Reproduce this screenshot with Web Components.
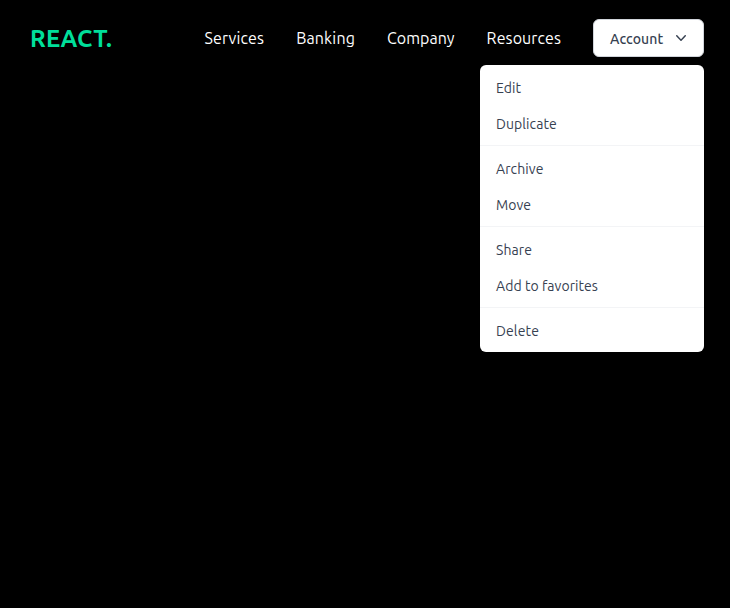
<!DOCTYPE html>
<html lang="en">
<head>
<meta charset="utf-8">
<title>React.</title>
<style>
html, body { margin: 0; background: #000; height: 100%; overflow: hidden; }
body { font-family: Ubuntu, "Noto Sans", sans-serif; }
</style>
</head>
<body>
<site-header>
  <brand-name slot="brand"><fit-text width="82">REACT.</fit-text></brand-name>
  <nav-link><fit-text width="59.7">Services</fit-text></nav-link>
  <nav-link><fit-text width="58.9">Banking</fit-text></nav-link>
  <nav-link><fit-text width="67.6">Company</fit-text></nav-link>
  <nav-link><fit-text width="74.4">Resources</fit-text></nav-link>
  <account-menu slot="account">
    <fit-text slot="label" width="53.3">Account</fit-text>
    <menu-group>
      <menu-item><fit-text width="25.2">Edit</fit-text></menu-item>
      <menu-item><fit-text width="60.8">Duplicate</fit-text></menu-item>
    </menu-group>
    <menu-group>
      <menu-item><fit-text width="47.5">Archive</fit-text></menu-item>
      <menu-item><fit-text width="35">Move</fit-text></menu-item>
    </menu-group>
    <menu-group>
      <menu-item><fit-text width="36">Share</fit-text></menu-item>
      <menu-item><fit-text width="102">Add to favorites</fit-text></menu-item>
    </menu-group>
    <menu-group>
      <menu-item><fit-text width="43">Delete</fit-text></menu-item>
    </menu-group>
  </account-menu>
</site-header>
<script>
function define(name, html, setup) {
  const template = document.createElement('template');
  template.innerHTML = html;
  customElements.define(name, class extends HTMLElement {
    constructor() {
      super();
      this.attachShadow({ mode: 'open' }).append(template.content.cloneNode(true));
    }
    connectedCallback() { if (setup) setup(this); }
  });
}

define('site-header', `
<style>
  :host { display: flex; align-items: center; box-sizing: border-box; height: 76px; padding: 0 26px 0 30px; color: #fff; }
  nav { display: flex; align-items: center; gap: 32px; margin-left: auto; }
</style>
<slot name="brand"></slot>
<nav><slot></slot><slot name="account"></slot></nav>`);

define('brand-name', `
<style>:host { display: block; padding-top: 2px; color: #00df9a; font-size: 24px; line-height: 32px; font-weight: 700; }</style>
<slot></slot>`);

define('nav-link', `
<style>:host { display: block; font-size: 16px; line-height: 24px; cursor: pointer; }</style>
<slot></slot>`);

define('account-menu', `
<style>
  :host { display: block; position: relative; color: #374151; font-size: 14px; line-height: 20px; }
  button { display: flex; align-items: center; box-sizing: border-box; width: 111px; height: 38px; margin: 0; padding: 0 12px 0 16px;
    background: #fff; border: 1px solid #d1d5db; border-radius: 6px; color: inherit; font: inherit; font-weight: 500; }
  slot[name="label"]::slotted(*) { padding-top: 2px; }
  svg { display: block; width: 20px; height: 20px; margin-left: auto; }
  .panel { position: absolute; top: 46px; right: 0; width: 224px; background: #fff; border-radius: 6px; overflow: hidden; }
</style>
<button type="button"><slot name="label"></slot>
  <svg viewBox="0 0 20 20" fill="currentColor" aria-hidden="true"><path fill-rule="evenodd" clip-rule="evenodd" d="M5.23 7.21a.75.75 0 011.06.02L10 11.168l3.71-3.938a.75.75 0 111.08 1.04l-4.25 4.5a.75.75 0 01-1.08 0l-4.25-4.5a.75.75 0 01.02-1.06z"/></svg>
</button>
<div class="panel"><slot></slot></div>`);

define('menu-group', `
<style>
  :host { display: block; padding: 4px 0; border-bottom: 1px solid #f3f4f6; }
  :host(:last-child) { border-bottom: 0; }
</style>
<slot></slot>`);

define('menu-item', `
<style>:host { display: block; padding: 9px 16px 7px; font-weight: 400; cursor: pointer; }</style>
<slot></slot>`);

// Spaces its letters so that the text fills the width attribute.
define('fit-text', `
<style>
  :host { display: block; white-space: nowrap; }
  span { display: inline-block; }
</style>
<span><slot></slot></span>`, el => {
  const width = Number(el.getAttribute('width'));
  const natural = el.shadowRoot.querySelector('span').getBoundingClientRect().width;
  el.style.width = width + 'px';
  el.style.letterSpacing = (width - natural) / el.textContent.length + 'px';
});
</script>
</body>
</html>
